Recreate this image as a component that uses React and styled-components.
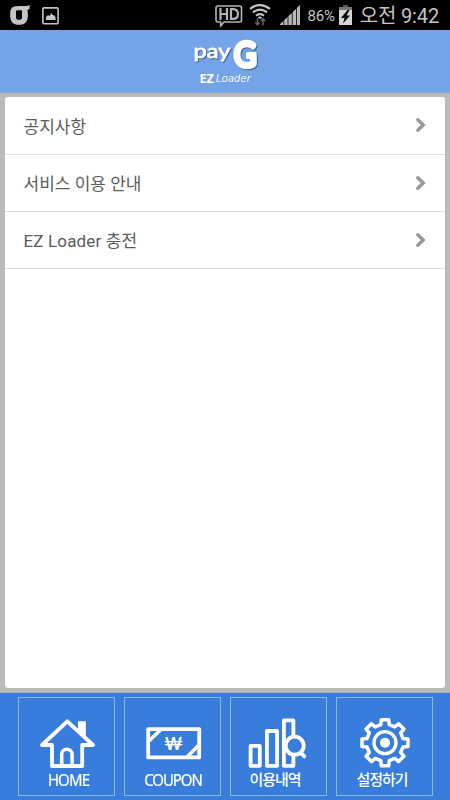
import React from 'react';
import styled, { createGlobalStyle } from 'styled-components';

const GlobalStyle = createGlobalStyle`
  * {
    box-sizing: border-box;
  }
  body {
    margin: 0;
    font-family: Roboto, 'Noto Sans CJK KR', sans-serif;
  }
`;

const Screen = styled.div`
  display: flex;
  flex-direction: column;
  width: 450px;
  height: 800px;
  overflow: hidden;
  background: #bbbbbc;
`;

const StatusBar = styled.div`
  display: flex;
  flex: none;
  align-items: center;
  justify-content: space-between;
  height: 30px;
  padding: 0 11px 0 10px;
  background: #000;
  color: #c4c4c4;
`;

const StatusGroup = styled.div`
  display: flex;
  align-items: center;
  height: 30px;
`;

const StatusIcon = styled.svg`
  display: block;
  flex: none;
  margin-right: ${(props) => props.$gap || 0}px;
`;

const StatusText = styled.span`
  font-size: ${(props) => props.$size}px;
  line-height: 30px;
  white-space: nowrap;
  letter-spacing: ${(props) => props.$spacing || 0}px;
  margin-right: ${(props) => props.$gap || 0}px;
  padding-top: 1px;
`;

const Header = styled.header`
  display: flex;
  flex: none;
  justify-content: center;
  height: 63px;
  background: #74a4e7;
  border-bottom: 1px solid #87a5d2;
`;

const Main = styled.main`
  flex: 1;
  padding: 4px 5px;
  border-bottom: 1px solid #aaaeb8;
`;

const List = styled.ul`
  height: 591px;
  margin: 0;
  padding: 0;
  list-style: none;
  background: #fff;
  border-radius: 3px;
`;

const Row = styled.li`
  display: flex;
  align-items: center;
  justify-content: space-between;
  height: ${(props) => (props.$first ? 58 : 57)}px;
  padding: 0 18px 1px 18.5px;
  border-bottom: 1px solid #e0e0e0;
  color: #5c5c5c;
  font-size: 17px;
  letter-spacing: ${(props) => props.$spacing || 0}px;
`;

const Nav = styled.nav`
  display: flex;
  flex: none;
  gap: 9px;
  height: 107px;
  padding: 4px 17px 4px 18px;
  background: #387ddb;
`;

const Tile = styled.button`
  display: flex;
  flex-direction: column;
  align-items: center;
  width: 97px;
  height: 99px;
  padding: 20px 0 0;
  border: 1px solid #8db5ee;
  background: none;
  color: #fff;
`;

const TileIcon = styled.svg`
  display: block;
  flex: none;
  overflow: visible;
`;

const Label = styled.span`
  margin-top: -1px;
  margin-left: ${(props) => props.$shift || 0}px;
  font-family: 'Noto Sans', 'Noto Sans CJK KR', sans-serif;
  font-size: 15px;
  font-weight: ${(props) => (props.$korean ? 500 : 400)};
  line-height: 20px;
  letter-spacing: ${(props) => props.$spacing}px;
  white-space: nowrap;
  transform: scaleY(${(props) => (props.$korean ? 1 : 1.1)});
  -webkit-text-stroke: ${(props) => (props.$korean ? 0 : 0.2)}px #fff;
`;

const stroke = {
  fill: 'none',
  stroke: '#fff',
  strokeWidth: 3.8,
  strokeLinejoin: 'round',
  strokeLinecap: 'round',
};

const HomeIcon = () => (
  <TileIcon width='61' height='52' {...stroke}>
    <path d='M42 3.3h7.8v18L42 13.5z' fill='#fff' stroke='none' />
    <path d='M16 27H6L31.3 3.3 57 27H46.2v21H16V27' />
    <path d='M25.7 48V36.5a5.2 5.2 0 0 1 10.4 0V48' strokeWidth='3.5' />
  </TileIcon>
);

const CouponIcon = () => (
  <TileIcon width='61' height='52' {...stroke}>
    <rect x='6.2' y='11.2' width='51' height='28.2' />
    <path d='M8 22L18.5 12M45.5 38.5L57 27' strokeWidth='3.6' />
    <text
      x='31.6'
      y='31.8'
      textAnchor='middle'
      fill='#fff'
      stroke='none'
      fontFamily='Roboto'
      fontSize='18'
      fontWeight='400'
      textLength='18'
      lengthAdjust='spacingAndGlyphs'
    >
      ₩
    </text>
  </TileIcon>
);

const HistoryIcon = () => (
  <TileIcon width='61' height='52' {...stroke}>
    <rect x='2.6' y='27.9' width='9.2' height='19.9' />
    <rect x='18.9' y='13' width='10.2' height='34.8' />
    <rect x='35.9' y='2.4' width='9.5' height='45.4' />
    <circle cx='46.7' cy='27.7' r='9' fill='#387ddb' />
    <path d='M53 35l3.3 3.4' />
  </TileIcon>
);

// Outline of an eight-toothed gear around (31, 24.7)
const gearPath = () => {
  const points = [];
  for (let i = 0; i < 8; i++) {
    const angle = (i * Math.PI) / 4;
    [
      [-0.23, 18.5],
      [-0.16, 23.3],
      [0.16, 23.3],
      [0.23, 18.5],
    ].forEach(([offset, radius]) => {
      const x = 31 + radius * Math.sin(angle + offset);
      const y = 24.7 - radius * Math.cos(angle + offset);
      points.push(`${x.toFixed(2)} ${y.toFixed(2)}`);
    });
  }
  return `M${points.join('L')}z`;
};

const SettingsIcon = () => (
  <TileIcon width='61' height='52' {...stroke}>
    <path d={gearPath()} strokeWidth='3.5' />
    <circle cx='31' cy='24.7' r='11' strokeWidth='3.3' />
    <circle cx='31' cy='24.7' r='5' fill='#fff' stroke='none' />
  </TileIcon>
);

const Chevron = () => (
  <svg width='12' height='16' viewBox='0 0 12 16' fill='none'>
    <path
      d='M2.8 2.8L8.2 8l-5.4 5.2'
      stroke='#999'
      strokeWidth='3.4'
      strokeLinecap='round'
    />
  </svg>
);

const Logo = () => (
  <svg width='80' height='62' fill='#fff'>
    <g
      strokeLinejoin='round'
      stroke='#fff'
      style={{ filter: 'drop-shadow(1px 1px 0.6px #3a6299)' }}
    >
      <text
        x='8.5'
        y='28'
        fontFamily='Lato'
        fontSize='20'
        fontWeight='400'
        strokeWidth='0.8'
        textLength='37'
        lengthAdjust='spacingAndGlyphs'
      >
        pay
      </text>
      <text
        x='49'
        y='37'
        fontFamily='Lato'
        fontSize='35'
        fontWeight='400'
        strokeWidth='4.6'
        textLength='22.5'
        lengthAdjust='spacingAndGlyphs'
      >
        G
      </text>
    </g>
    <text
      x='14.5'
      y='53'
      fontFamily='Noto Sans'
      fontSize='12.5'
      fontWeight='700'
      textLength='14.5'
      lengthAdjust='spacingAndGlyphs'
    >
      EZ
    </text>
    <text
      x='31'
      y='52'
      fontFamily='DejaVu Sans'
      fontStyle='italic'
      fontSize='10.5'
      textLength='35'
      lengthAdjust='spacingAndGlyphs'
      opacity='0.9'
    >
      Loader
    </text>
  </svg>
);

const rows = [
  { text: '공지사항' },
  { text: '서비스 이용 안내' },
  { text: 'EZ Loader 충전', spacing: 0.15 },
];

const tabs = [
  { label: 'HOME', icon: HomeIcon, spacing: -0.9, shift: 4 },
  { label: 'COUPON', icon: CouponIcon, spacing: -1.1, shift: 1 },
  { label: '이용내역', icon: HistoryIcon, spacing: -1, shift: -7, korean: true },
  { label: '설정하기', icon: SettingsIcon, spacing: -1, shift: -5, korean: true },
];

const App = () => (
  <>
    <GlobalStyle />
    <Screen>
      <StatusBar>
        <StatusGroup>
          <StatusIcon width='20' height='20' $gap={12} fill='#c4c4c4'>
            <path
              fillRule='evenodd'
              d='M19.6 0v3.8l-2.2 1.4q.5 1.5.5 5.3c0 6-2.9 9.3-8.9 9.3S.2 16.5.2 10.4.5 1 9 1h6.5q2.6 0 4.1-1zM6 6.2v6q0 2.6 3 2.6t3-2.6v-7H7.5q-1.500 0-1.500 1z'
            />
          </StatusIcon>
          <StatusIcon width='17' height='19' fill='none' stroke='#c4c4c4'>
            <rect x='0.9' y='1.9' width='15.2' height='15.8' rx='1' strokeWidth='1.6' />
            <path d='M4 14v-3l2-2 1.5 1 2-3 1.5 2.5 1-.5 1.5 2v3z' fill='#c4c4c4' stroke='none' />
          </StatusIcon>
        </StatusGroup>
        <StatusGroup>
          <StatusIcon width='28' height='24' $gap={6} fill='none' stroke='#b4b4b4' strokeWidth='1.6'>
            <path d='M3 3h21.5q2 0 2 2v12q0 2-2 2H9l-3.3 4V19H3q-2 0-2-2V5q0-2 2-2z' />
            <path d='M5.5 5v12M12 5v12M5.5 11H12M16 6.1v9.8h2.2c3.4 0 4.7-2 4.7-4.9s-1.3-4.9-4.7-4.9z' strokeWidth='2.2' />
          </StatusIcon>
          <StatusIcon width='22' height='24' $gap={9} fill='none' stroke='#c4c4c4' strokeWidth='2.1'>
            <path d='M1 5.8q10-7.5 20 0M4 9.3q7-5.2 14 0M7 12.6q4-3 8 0' />
            <path d='M9.5 15q1.5-1 3 0' />
            <path d='M8.5 15v7M6.3 19.2l2.2 2.6 2.2-2.6M14 22.5v-7M11.8 18.2l2.2-2.6 2.2 2.6' stroke='#666' strokeWidth='1.5' />
          </StatusIcon>
          <StatusIcon width='20' height='20' $gap={7} fill='#b8b8b8'>
            <path d='M0 20v-1l3.4-3v4zM4.2 20v-5l3.4-3v8zM8.4 20v-9l3.4-3v12zM12.6 20V7L16 4v16zM16.8 20V3L20 0v20z' />
          </StatusIcon>
          <StatusText $size={15} $spacing={-0.2} $gap={4}>
            86%
          </StatusText>
          <StatusIcon width='13' height='20' $gap={8} fill='#d4d4d4'>
            <path d='M4 0h5v2H4z' fill='#555' />
            <path d='M0 2h13v3H0z' fill='#777' />
            <path d='M0 5h13v15H0z' />
            <path d='M8.5 5L2 13h3.6L4 18.5l7-8H7.5L10.5 5z' fill='#000' />
          </StatusIcon>
          <StatusText $size={20} $spacing={-0.15}>
            오전 9:42
          </StatusText>
        </StatusGroup>
      </StatusBar>
      <Header>
        <Logo />
      </Header>
      <Main>
        <List>
          {rows.map((row, i) => (
            <Row key={row.text} $first={i === 0} $spacing={row.spacing}>
              {row.text}
              <Chevron />
            </Row>
          ))}
        </List>
      </Main>
      <Nav>
        {tabs.map(({ label, icon: Icon, spacing, shift, korean }) => (
          <Tile key={label} type='button'>
            <Icon />
            <Label $spacing={spacing} $shift={shift} $korean={korean}>
              {label}
            </Label>
          </Tile>
        ))}
      </Nav>
    </Screen>
  </>
);

export default App;
